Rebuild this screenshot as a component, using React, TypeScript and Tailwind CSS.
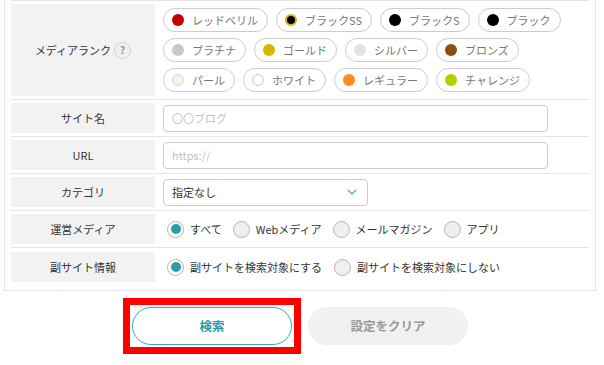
import React from "react";

type TRank = { name: string; dot: string };

const ranks: TRank[] = [
  { name: "レッドベリル", dot: "bg-[#c40000]" },
  { name: "ブラックSS", dot: "bg-black border-2 border-[#d9b300]" },
  { name: "ブラックS", dot: "bg-black w-[10px] h-[10px]" },
  { name: "ブラック", dot: "bg-black" },
  { name: "プラチナ", dot: "bg-[#c5cbca]" },
  { name: "ゴールド", dot: "bg-[#d8b600]" },
  { name: "シルバー", dot: "bg-[#e2e2e2]" },
  { name: "ブロンズ", dot: "bg-[#8a4e10]" },
  { name: "パール", dot: "bg-[#fbeee2] border border-[#e3d6cc]" },
  { name: "ホワイト", dot: "bg-white border border-[#c8c8c8]" },
  { name: "レギュラー", dot: "bg-[#ff8b26]" },
  { name: "チャレンジ", dot: "bg-[#b7cd00]" },
];

const Label: React.FC<{ children: React.ReactNode; tall?: boolean }> = ({
  children,
  tall,
}) => (
  <div
    className={`w-[144px] shrink-0 bg-[#f2f2f2] flex items-center justify-center text-[11px] leading-none text-[#333] ${
      tall ? "self-stretch" : "h-[30px]"
    }`}
  >
    {children}
  </div>
);

const Radio: React.FC<{ label: string; checked?: boolean }> = ({
  label,
  checked,
}) => (
  <label className="flex items-center gap-[6px] text-[11px] leading-none text-[#333]">
    <span
      className={`w-[17px] h-[17px] rounded-full border border-[#b5b5b5] flex items-center justify-center ${
        checked ? "bg-white" : "bg-[#efefef]"
      }`}
    >
      {checked && <span className="w-[10px] h-[10px] rounded-full bg-[#2a9dab]" />}
    </span>
    {label}
  </label>
);

const App: React.FC = () => {
  return (
    <div
      className="w-[604px] h-[365px] bg-white overflow-hidden"
      style={{ fontFamily: '"Noto Sans CJK JP", "Noto Sans", sans-serif' }}
    >
      <div className="ml-[4px] w-[592px] border-x border-b border-[#e6e6e6] px-[6px]">
        {/* メディアランク */}
        <div className="flex border-t border-[#e6e6e6] pt-[3px] pb-[3px]">
          <Label tall>
            メディアランク
            <span className="ml-[3px] w-[17px] h-[17px] rounded-full border border-[#cfcfcf] bg-[#f0f0f0] flex items-center justify-center text-[10px] font-bold text-[#999]">
              ?
            </span>
          </Label>
          <div className="flex flex-wrap content-start gap-x-[8px] gap-y-[6px] pl-[8px] py-[4px] w-[420px]">
            {ranks.map((r) => (
              <span
                key={r.name}
                className="h-[24px] flex items-center gap-[8px] pl-[8px] pr-[9px] rounded-full border border-[#cccccc] bg-white text-[11px] leading-none text-[#777]"
              >
                <span className={`w-[12px] h-[12px] rounded-full box-border ${r.dot}`} />
                {r.name}
              </span>
            ))}
          </div>
        </div>

        {/* サイト名 */}
        <div className="flex items-center border-t border-[#e6e6e6] pt-[3px] pb-[3px]">
          <Label>サイト名</Label>
          <div className="pl-[8px]">
            <input
              className="w-[385px] h-[27px] rounded-[4px] border border-[#cccccc] px-[8px] text-[11px] outline-none placeholder:text-[#c2c2c2]"
              placeholder="〇〇ブログ"
            />
          </div>
        </div>

        {/* URL */}
        <div className="flex items-center border-t border-[#e6e6e6] pt-[3px] pb-[3px]">
          <Label>URL</Label>
          <div className="pl-[8px]">
            <input
              className="w-[385px] h-[27px] rounded-[4px] border border-[#cccccc] px-[8px] text-[11px] outline-none placeholder:text-[#c2c2c2]"
              placeholder="https://"
            />
          </div>
        </div>

        {/* カテゴリ */}
        <div className="flex items-center border-t border-[#e6e6e6] pt-[3px] pb-[3px]">
          <Label>カテゴリ</Label>
          <div className="pl-[8px]">
            <div className="w-[205px] h-[27px] rounded-[4px] border border-[#cccccc] pl-[8px] pr-[10px] flex items-center justify-between text-[11px] text-[#333]">
              指定なし
              <svg width="10" height="7" viewBox="0 0 10 7" fill="none">
                <path d="M1 1l4 4 4-4" stroke="#4db7c3" strokeWidth="1.4" />
              </svg>
            </div>
          </div>
        </div>

        {/* 運営メディア */}
        <div className="flex items-center border-t border-[#e6e6e6] pt-[3px] pb-[3px]">
          <Label>運営メディア</Label>
          <div className="pl-[12px] flex items-center gap-[11px]">
            <Radio label="すべて" checked />
            <Radio label="Webメディア" />
            <Radio label="メールマガジン" />
            <Radio label="アプリ" />
          </div>
        </div>

        {/* 副サイト情報 */}
        <div className="flex items-center border-t border-[#e6e6e6] pt-[4px] pb-[8px]">
          <Label>副サイト情報</Label>
          <div className="pl-[12px] flex items-center gap-[12px]">
            <Radio label="副サイトを検索対象にする" checked />
            <Radio label="副サイトを検索対象にしない" />
          </div>
        </div>
      </div>

      <div className="ml-[4px] w-[592px] mt-[16px] flex justify-center gap-[16px]">
        <div className="relative">
          <button
            type="button"
            className="w-[160px] h-[38px] rounded-full border border-[#3ba9b6] bg-white text-[12.5px] font-bold text-[#2b9aa8]"
          >
            検索
          </button>
          <div className="absolute -inset-[9px] border-[7px] border-[#ff0000] pointer-events-none" />
        </div>
        <button
          type="button"
          className="w-[160px] h-[38px] rounded-full bg-[#f1f1f1] text-[12.5px] font-bold text-[#999]"
        >
          設定をクリア
        </button>
      </div>
    </div>
  );
};

export default App;
